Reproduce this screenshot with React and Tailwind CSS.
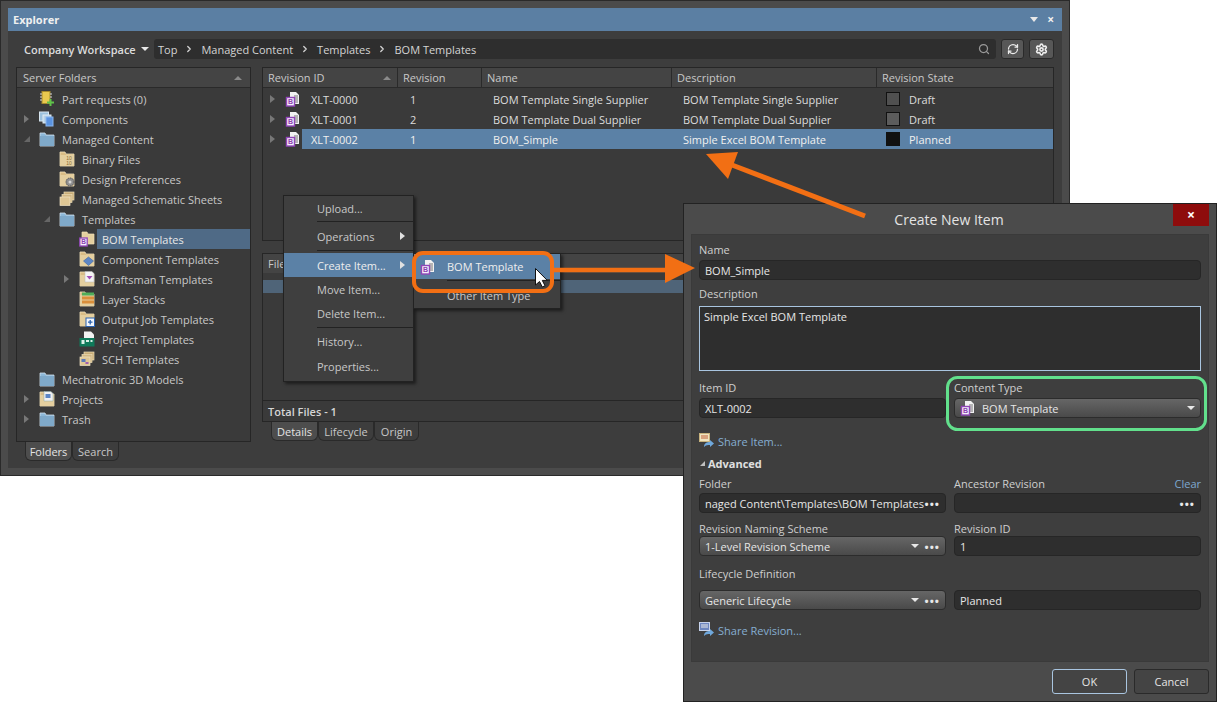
import React from "react";
import { ChevronRight, Search, RefreshCw, Settings } from "lucide-react";

const FolderBlue = () => (
  <svg width="16" height="16" viewBox="0 0 16 16">
    <path d="M1 2h5l1 2h8v11H1z" fill="#8db8d8" stroke="#cfe0ee" strokeWidth="0.8" />
    <rect x="1" y="5" width="14" height="10" fill="#7fa9c9" />
  </svg>
);

const FolderTan = ({ children }) => (
  <svg width="16" height="16" viewBox="0 0 16 16">
    <path d="M1 1h5l1 2h8v12H1z" fill="#d9bc85" stroke="#f0dfb8" strokeWidth="0.8" />
    <rect x="1" y="4" width="14" height="11" fill="#e4cf9f" />
    {children}
  </svg>
);

const BomIcon = () => (
  <svg width="16" height="16" viewBox="0 0 16 16">
    <path d="M5 1h6l3 3v9H5z" fill="#f2f2f2" />
    <path d="M9 5h4M9 7h4M9 9h4M9 11h4" stroke="#777" strokeWidth="1" />
    <rect x="1.5" y="6.5" width="8" height="8.5" fill="#f5f0fa" stroke="#9146b8" strokeWidth="1.4" />
    <text x="5.5" y="13.4" fontSize="7" fontWeight="700" textAnchor="middle" fill="#8a3fb0" fontFamily="Liberation Sans, sans-serif">B</text>
  </svg>
);

const treeIcons = {
  part: (
    <svg width="16" height="16" viewBox="0 0 16 16">
      <rect x="3" y="0.5" width="8" height="12" fill="#e9c94f" stroke="#a58a2c" />
      <path d="M1 3h2M1 6h2M1 9h2M11 3h2M11 6h2" stroke="#d8d8d8" />
      <path d="M11.5 8v7M8 11.5h7" stroke="#5fc24a" strokeWidth="2" />
    </svg>
  ),
  comp: (
    <svg width="16" height="16" viewBox="0 0 16 16">
      <rect x="0.5" y="1" width="9" height="9" fill="#9cc1dc" stroke="#d7e5ef" />
      <rect x="4" y="4" width="8" height="8" fill="#b8d2e6" stroke="#e0ebf3" />
      <rect x="7" y="6" width="7" height="9" fill="#5a93e0" stroke="#8ab6ee" />
    </svg>
  ),
  blue: <FolderBlue />,
  binary: (
    <FolderTan>
      <text x="10" y="8.5" fontSize="5" textAnchor="middle" fill="#8a6d35" fontFamily="Liberation Sans, sans-serif">10</text>
      <text x="10" y="13.5" fontSize="5" textAnchor="middle" fill="#8a6d35" fontFamily="Liberation Sans, sans-serif">10</text>
    </FolderTan>
  ),
  prefs: (
    <FolderTan>
      <circle cx="11" cy="11" r="4" fill="#8f8f8f" stroke="#555" strokeDasharray="1.5 0.8" />
      <circle cx="11" cy="11" r="1.5" fill="#d5d5d5" />
    </FolderTan>
  ),
  sheets: (
    <svg width="16" height="16" viewBox="0 0 16 16">
      <rect x="5" y="1" width="10" height="8" fill="#c9ad77" stroke="#ecdcb6" strokeWidth="0.7" />
      <rect x="3" y="3.5" width="10" height="8" fill="#d3b884" stroke="#ecdcb6" strokeWidth="0.7" />
      <rect x="1" y="6" width="10" height="8.5" fill="#dfc795" stroke="#f0e3c4" strokeWidth="0.7" />
    </svg>
  ),
  bom: (
    <svg width="16" height="16" viewBox="0 0 16 16">
      <path d="M3 1h5l1 2h6v10H3z" fill="#e4cf9f" stroke="#f0dfb8" strokeWidth="0.7" />
      <rect x="0.8" y="7" width="7.4" height="8" fill="#f5f0fa" stroke="#9146b8" strokeWidth="1.3" />
      <text x="4.5" y="13.4" fontSize="6.5" fontWeight="700" textAnchor="middle" fill="#8a3fb0" fontFamily="Liberation Sans, sans-serif">B</text>
    </svg>
  ),
  component: (
    <FolderTan>
      <path d="M9.5 6l5 4-5 4.5-5-4.5z" fill="#5d86c4" stroke="#3f65a0" strokeWidth="0.6" />
    </FolderTan>
  ),
  draftsman: (
    <FolderTan>
      <path d="M6 0.5h7l2 2V11H6z" fill="#f4f4f4" stroke="#bbb" strokeWidth="0.5" />
      <path d="M7.5 5h6l-3 3.5z" fill="#a04fb5" />
    </FolderTan>
  ),
  layers: (
    <FolderTan>
      <rect x="3" y="1.5" width="12" height="3" fill="#4fae5a" />
      <rect x="3" y="5.5" width="12" height="3" fill="#d98e3a" />
      <rect x="3" y="9.5" width="12" height="3" fill="#d98e3a" />
    </FolderTan>
  ),
  output: (
    <FolderTan>
      <rect x="7" y="7" width="8.5" height="8.5" fill="#f2f6fb" stroke="#2b62b0" />
      <path d="M11.2 9v4.5M9 11.2h4.5" stroke="#2b62b0" strokeWidth="1.3" />
    </FolderTan>
  ),
  project: (
    <svg width="16" height="16" viewBox="0 0 16 16">
      <path d="M5 0.5h7l3 3V9H5z" fill="#f2f2f2" />
      <rect x="0.5" y="7" width="15" height="8.5" fill="#0f7a5a" />
      <rect x="2.5" y="9" width="3" height="4" fill="#d9f0e7" />
      <rect x="7" y="9" width="3" height="2" fill="#d9f0e7" />
      <rect x="11.5" y="9" width="2" height="2" fill="#d9f0e7" />
    </svg>
  ),
  sch: (
    <svg width="16" height="16" viewBox="0 0 16 16">
      <rect x="5" y="1" width="10" height="8" fill="#c9ad77" stroke="#ecdcb6" strokeWidth="0.7" />
      <rect x="3" y="3.5" width="10" height="8" fill="#d3b884" stroke="#ecdcb6" strokeWidth="0.7" />
      <rect x="1" y="6" width="10" height="8.5" fill="#dfc795" stroke="#f0e3c4" strokeWidth="0.7" />
      <rect x="2.5" y="8" width="4" height="3" fill="#5d79b8" />
      <rect x="6.5" y="11" width="3" height="2" fill="#a05fb0" />
    </svg>
  ),
  projects: (
    <FolderTan>
      <path d="M5 0.5h7l2 2V10H5z" fill="#f1f1f1" stroke="#8aa" strokeWidth="0.5" />
      <rect x="6.5" y="3" width="5" height="4" fill="#5d86c4" />
    </FolderTan>
  ),
};

const tree = [
  { level: 0, icon: "part", label: "Part requests (0)" },
  { level: 0, icon: "comp", label: "Components", arrow: "right" },
  { level: 0, icon: "blue", label: "Managed Content", arrow: "down" },
  { level: 1, icon: "binary", label: "Binary Files" },
  { level: 1, icon: "prefs", label: "Design Preferences" },
  { level: 1, icon: "sheets", label: "Managed Schematic Sheets" },
  { level: 1, icon: "blue", label: "Templates", arrow: "down" },
  { level: 2, icon: "bom", label: "BOM Templates", selected: true },
  { level: 2, icon: "component", label: "Component Templates" },
  { level: 2, icon: "draftsman", label: "Draftsman Templates", arrow: "right" },
  { level: 2, icon: "layers", label: "Layer Stacks" },
  { level: 2, icon: "output", label: "Output Job Templates" },
  { level: 2, icon: "project", label: "Project Templates" },
  { level: 2, icon: "sch", label: "SCH Templates" },
  { level: 0, icon: "blue", label: "Mechatronic 3D Models" },
  { level: 0, icon: "projects", label: "Projects", arrow: "right" },
  { level: 0, icon: "blue", label: "Trash", arrow: "right" },
];

const indent = ["pl-[7px]", "pl-[27px]", "pl-[47px]"];

const revisions = [
  { id: "XLT-0000", rev: "1", name: "BOM Template Single Supplier", desc: "BOM Template Single Supplier", state: "Draft", swatch: "bg-[#505050]" },
  { id: "XLT-0001", rev: "2", name: "BOM Template Dual Supplier", desc: "BOM Template Dual Supplier", state: "Draft", swatch: "bg-[#5c5c5c]" },
  { id: "XLT-0002", rev: "1", name: "BOM_Simple", desc: "Simple Excel BOM Template", state: "Planned", swatch: "bg-[#111111]", selected: true },
];

const columns = [
  { label: "Revision ID", w: "w-[135px]", sort: true },
  { label: "Revision", w: "w-[84px]" },
  { label: "Name", w: "w-[190px]" },
  { label: "Description", w: "w-[205px]" },
  { label: "Revision State", w: "flex-1" },
];

const TreeArrow = ({ dir }) => {
  if (dir === "right") return <div className="w-0 h-0 border-y-[4px] border-y-transparent border-l-[5px] border-l-[#777]" />;
  if (dir === "down") return <div className="w-0 h-0 border-b-[6px] border-b-[#666] border-l-[6px] border-l-transparent" />;
  return null;
};

const Caret = ({ className = "" }) => (
  <div className={`w-0 h-0 border-x-[4px] border-x-transparent border-t-[4px] border-t-[#e8e8e8] ${className}`} />
);

const Dots = () => <span className="text-[#e8e8e8] font-bold text-[11px] tracking-[1px] leading-none">•••</span>;

const TabStrip = ({ tabs, className }) => (
  <div className={`flex h-[19px] ${className}`}>
    {tabs.map((t, i) => (
      <div
        key={t.label}
        className={`${t.w} flex items-center justify-center rounded-b-md border border-t-0 border-[#2a2a2a] ${i === 0 ? "bg-[#4d4d4d] text-[#e4e4e4]" : "bg-[#3d3d3d]"}`}
      >
        {t.label}
      </div>
    ))}
  </div>
);

const MenuItem = ({ label, h, arrow, active, pad = "pl-[33px]" }) => (
  <div className={`${h} flex items-center ${pad} relative ${active ? "bg-[#5b81a6] text-[#eeeeee]" : ""}`}>
    {label}
    {arrow && <div className="absolute right-[8px] w-0 h-0 border-y-[4px] border-y-transparent border-l-[5px] border-l-[#e0e0e0]" />}
  </div>
);

const MenuSep = () => <div className="h-px ml-[33px] bg-[#222222]" />;

const Field = ({ children, className = "" }) => (
  <div className={`h-[20px] rounded-[4px] bg-[#2e2e2e] border border-[#262626] flex items-center px-[5px] text-[#e6e6e6] ${className}`}>
    {children}
  </div>
);

const Combo = ({ children, className = "" }) => (
  <div className={`h-[20px] rounded-[4px] bg-gradient-to-b from-[#666666] to-[#4a4a4a] border border-[#2c2c2c] flex items-center px-[5px] text-[#e6e6e6] ${className}`}>
    {children}
  </div>
);

const Label = ({ children, className = "" }) => <div className={`h-[16px] flex items-center text-[#cfcfcf] ${className}`}>{children}</div>;

const ShareIcon = ({ dark }) => (
  <svg width="16" height="16" viewBox="0 0 16 16">
    <rect x="0.5" y="0.5" width="10" height="8" fill={dark ? "#6d86c0" : "#f0e4c0"} stroke={dark ? "#c7d3ec" : "#c7b27e"} />
    <path d="M2 3h7M2 5h7" stroke={dark ? "#e8e8e8" : "#c0603c"} />
    <path d="M5 14c0-4 3-5 6-5V7l4 3.5-4 3.5v-2c-2 0-4 0-6 2z" fill="#6fa8dc" />
  </svg>
);

export default function App() {
  return (
    <div className="relative w-[1217px] h-[702px] bg-white overflow-hidden text-[11px] leading-none text-[#c8c8c8] font-['Open_Sans',sans-serif]">
      {/* Explorer panel */}
      <div className="w-[1070px] h-[476px] border border-[#2a2a2a] bg-[#4b4b4b] px-[7px] pt-[7px] pb-[7px] flex flex-col">
        <div className="h-[23px] shrink-0 bg-[#5b7fa3] flex items-center justify-between pl-[5px] pr-[8px]">
          <span className="font-bold text-[#f0f0f0]">Explorer</span>
          <div className="flex items-center gap-[9px]">
            <Caret className="border-x-[3.5px] border-t-[5px]" />
            <span className="font-bold text-[#f0f0f0] text-[12px]">×</span>
          </div>
        </div>
        <div className="flex-1 min-h-0 bg-[#3d3d3d] px-[8px] pt-[8px] flex flex-col">
          {/* Toolbar */}
          <div className="h-[20px] flex items-center shrink-0">
            <span className="ml-[8px] w-[119px] font-semibold text-[#dcdcdc]">Company Workspace</span>
            <Caret className="border-x-[2.5px] border-t-[3px] -ml-[2px]" />
            <div className="ml-[5px] flex-1 h-[20px] rounded-[3px] bg-[#2e2e2e] flex items-center pl-[4px] pr-[6px] text-[#d4d4d4]">
              <span>Top</span>
              <ChevronRight size={10} strokeWidth={3} className="mx-[7px] text-[#d4d4d4]" />
              <span>Managed Content</span>
              <ChevronRight size={10} strokeWidth={3} className="mx-[7px] text-[#d4d4d4]" />
              <span>Templates</span>
              <ChevronRight size={10} strokeWidth={3} className="mx-[7px] text-[#d4d4d4]" />
              <span>BOM Templates</span>
              <Search size={12} strokeWidth={2.5} className="ml-auto text-[#9a9a9a]" />
            </div>
            <div className="ml-[5px] w-[23px] h-[20px] rounded-[3px] border border-[#2a2a2a] bg-[#575757] flex items-center justify-center">
              <RefreshCw size={12} strokeWidth={2.5} className="text-[#eeeeee]" />
            </div>
            <div className="ml-[5px] w-[25px] h-[20px] rounded-[3px] border border-[#2a2a2a] bg-[#575757] flex items-center justify-center">
              <Settings size={13} strokeWidth={3} className="text-[#eeeeee]" />
            </div>
          </div>

          <div className="mt-[8px] flex gap-[11px] flex-1 min-h-0">
            {/* Server folders */}
            <div className="w-[235px] flex flex-col">
              <div className="h-[375px] border border-[#262626] bg-[#3a3a3a]">
                <div className="h-[20px] flex items-center justify-between px-[6px] bg-[#444444] border-b border-[#2a2a2a]">
                  <span>Server Folders</span>
                  <div className="w-0 h-0 mr-[2px] border-x-[4px] border-x-transparent border-b-[4px] border-b-[#8a8a8a]" />
                </div>
                <div className="pt-[1px]">
                  {tree.map((n) => (
                    <div key={n.label} className={`h-[20px] flex items-center ${indent[n.level]}`}>
                      <div className="w-[15px] shrink-0">
                        <TreeArrow dir={n.arrow} />
                      </div>
                      <div className="w-[16px] shrink-0">{treeIcons[n.icon]}</div>
                      <div className={`ml-[2px] flex-1 h-full flex items-center pl-[5px] ${n.selected ? "bg-[#4f6a86] text-[#e8e8e8]" : ""}`}>
                        {n.label}
                      </div>
                    </div>
                  ))}
                </div>
              </div>
              <TabStrip
                className="ml-[9px]"
                tabs={[
                  { label: "Folders", w: "w-[47px]" },
                  { label: "Search", w: "w-[47px]" },
                ]}
              />
            </div>

            {/* Revisions */}
            <div className="w-[792px] flex flex-col">
              <div className="h-[174px] shrink-0 border border-[#262626] bg-[#3a3a3a]">
                <div className="h-[20px] flex bg-[#444444] border-b border-[#2a2a2a]">
                  {columns.map((c, i) => (
                    <div key={c.label} className={`${c.w} relative flex items-center pl-[5px] ${i < columns.length - 1 ? "border-r border-[#2a2a2a]" : ""}`}>
                      {c.label}
                      {c.sort && <div className="absolute right-[6px] w-0 h-0 border-x-[4px] border-x-transparent border-b-[4px] border-b-[#8a8a8a]" />}
                    </div>
                  ))}
                </div>
                <div className="pt-[1px]">
                  {revisions.map((r) => (
                    <div key={r.id} className="h-[20px] flex items-center">
                      <div className="w-[39px] shrink-0 flex items-center pl-[7px]">
                        <div className="w-[15px]"><TreeArrow dir="right" /></div>
                        <BomIcon />
                      </div>
                      <div className={`flex-1 h-full flex items-center text-[#dcdcdc] ${r.selected ? "bg-[#5b81a6] text-[#f0f0f0]" : ""}`}>
                        <div className="w-[103px] pl-[9px]">{r.id}</div>
                        <div className="w-[84px] pl-[5px]">{r.rev}</div>
                        <div className="w-[190px] pl-[4px]">{r.name}</div>
                        <div className="w-[205px] pl-[4px]">{r.desc}</div>
                        <div className="flex-1 flex items-center pl-[2px]">
                          <div className={`w-[14px] h-[14px] border border-[#111111] ${r.swatch}`} />
                          <span className="ml-[9px]">{r.state}</span>
                        </div>
                      </div>
                    </div>
                  ))}
                </div>
              </div>

              <div className="mt-[12px] h-[169px] shrink-0 border border-[#262626] bg-[#3a3a3a] flex flex-col">
                <div className="h-[19px] flex items-center pl-[5px] bg-[#444444]">File Name</div>
                <div className="h-[7px]" />
                <div className="h-[13px] w-[420px] bg-[#4f6478]" />
                <div className="flex-1" />
                <div className="h-[21px] border-t border-[#262626] flex items-center pl-[5px] font-semibold text-[#d6d6d6]">Total Files - 1</div>
              </div>
              <TabStrip
                className="ml-[9px]"
                tabs={[
                  { label: "Details", w: "w-[47px]" },
                  { label: "Lifecycle", w: "w-[56px]" },
                  { label: "Origin", w: "w-[45px]" },
                ]}
              />
            </div>
          </div>
        </div>
      </div>

      {/* Context menu */}
      <div className="absolute left-[283px] top-[195px] w-[131px] h-[187px] bg-[#3f3f3f] border border-[#222222] shadow-[2px_2px_3px_rgba(0,0,0,0.5)]">
        <MenuItem label="Upload..." h="h-[25px]" />
        <MenuSep />
        <MenuItem label="Operations" h="h-[28px]" arrow />
        <MenuSep />
        <div className="h-[2px]" />
        <MenuItem label="Create Item..." h="h-[24px]" arrow active />
        <MenuItem label="Move Item..." h="h-[24px]" />
        <MenuItem label="Delete Item..." h="h-[24px]" />
        <div className="h-[2px]" />
        <MenuSep />
        <MenuItem label="History..." h="h-[26px]" />
        <MenuItem label="Properties..." h="h-[24px]" />
      </div>

      {/* Submenu */}
      <div className="absolute left-[413px] top-[253px] w-[148px] h-[56px] bg-[#3f3f3f] border border-[#222222] shadow-[2px_2px_3px_rgba(0,0,0,0.5)]">
        <div className="h-[25px] bg-[#5b81a6] text-[#eeeeee] flex items-center pl-[6px]">
          <BomIcon />
          <span className="ml-[11px]">BOM Template</span>
        </div>
        <div className="h-px ml-[33px] mt-[1px] bg-[#222222]" />
        <div className="h-[28px] flex items-center pl-[33px]">Other Item Type</div>
      </div>

      {/* Create New Item dialog */}
      <div className="absolute left-[683px] top-[203px] w-[534px] h-[499px] bg-[#4b4b4b] border border-[#222222] flex flex-col">
        <div className="h-[30px] shrink-0 relative flex items-center justify-center pt-[1px]">
          <span className="text-[14px] text-[#e4e4e4] ml-[-2px]">Create New Item</span>
          <div className="absolute right-[7px] top-0 w-[36px] h-[22px] bg-[#8e0c0c] flex items-center justify-center text-white font-bold text-[14px]">×</div>
        </div>
        <div className="mx-[7px] h-[428px] shrink-0 border border-[#3a3a3a] bg-[#3e3e3e] px-[7px] pt-[6px]">
          <Label>Name</Label>
          <Field className="mt-[3px] h-[20px]">BOM_Simple</Field>
          <Label className="mt-[5px]">Description</Label>
          <div className="mt-[5px] h-[65px] bg-[#2e2e2e] border border-[#a9c5e0] px-[4px] pt-[3px] text-[#e6e6e6] leading-[14px]">Simple Excel BOM Template</div>
          <div className="mt-[8px] grid grid-cols-[247px_247px] gap-x-[8px]">
            <Label>Item ID</Label>
            <Label>Content Type</Label>
            <Field className="mt-[3px]">XLT-0002</Field>
            <Combo className="mt-[3px]">
              <BomIcon />
              <span className="ml-[6px]">BOM Template</span>
              <Caret className="ml-auto" />
            </Combo>
          </div>
          <div className="mt-[15px] h-[16px] flex items-center text-[#86aed2]">
            <ShareIcon />
            <span className="ml-[3px]">Share Item...</span>
          </div>
          <div className="mt-[6px] h-[16px] flex items-center pl-[1px] font-bold text-[#e0e0e0]">
            <div className="w-0 h-0 border-b-[5px] border-b-[#c0c0c0] border-l-[5px] border-l-transparent" />
            <span className="ml-[3px]">Advanced</span>
          </div>
          <div className="mt-[4px] grid grid-cols-[247px_247px] gap-x-[8px]">
            <Label>Folder</Label>
            <Label className="justify-between">
              <span>Ancestor Revision</span>
              <span className="text-[#7fa9d0]">Clear</span>
            </Label>
            <Field className="mt-[2px] justify-between">
              <span>naged Content\Templates\BOM Templates</span>
              <Dots />
            </Field>
            <Field className="mt-[2px] justify-end">
              <Dots />
            </Field>
            <Label className="mt-[7px]">Revision Naming Scheme</Label>
            <Label className="mt-[7px]">Revision ID</Label>
            <Combo>
              <span>1-Level Revision Scheme</span>
              <Caret className="ml-auto mr-[6px]" />
              <Dots />
            </Combo>
            <Field>1</Field>
            <Label className="mt-[9px]">Lifecycle Definition</Label>
            <div />
            <Combo className="mt-[9px]">
              <span>Generic Lifecycle</span>
              <Caret className="ml-auto mr-[6px]" />
              <Dots />
            </Combo>
            <Field className="mt-[9px]">Planned</Field>
          </div>
          <div className="mt-[12px] h-[16px] flex items-center text-[#86aed2]">
            <ShareIcon dark />
            <span className="ml-[3px]">Share Revision...</span>
          </div>
        </div>
        <div className="flex justify-end gap-[7px] pr-[7px] pt-[7px]">
          <div className="w-[75px] h-[25px] rounded-[3px] border border-[#a9c5e0] bg-[#444444] flex items-center justify-center text-[#e4e4e4]">OK</div>
          <div className="w-[75px] h-[25px] rounded-[3px] border border-[#2a2a2a] bg-[#444444] flex items-center justify-center text-[#e4e4e4]">Cancel</div>
        </div>
      </div>

      {/* Annotations */}
      <svg className="absolute left-0 top-0 pointer-events-none" width="1217" height="702" viewBox="0 0 1217 702">
        <path d="M865 216L732 165" stroke="#f26f14" strokeWidth="5" />
        <path d="M706 154L738 152L728 179z" fill="#f26f14" />
        <rect x="414" y="253" width="138" height="38" rx="9" fill="none" stroke="#f26f14" strokeWidth="4" />
        <path d="M552 270H666" stroke="#f26f14" strokeWidth="4.5" />
        <path d="M665 254L695 268L665 283z" fill="#f26f14" />
        <rect x="947.5" y="377.5" width="258" height="52" rx="10" fill="none" stroke="#62e08c" strokeWidth="3" />
        <path d="M535.5 268.5V285l4-3.5 2.8 5.5 2.7-1.3-2.7-5.3h5z" fill="#ffffff" stroke="#111111" strokeWidth="1" />
      </svg>
    </div>
  );
}
